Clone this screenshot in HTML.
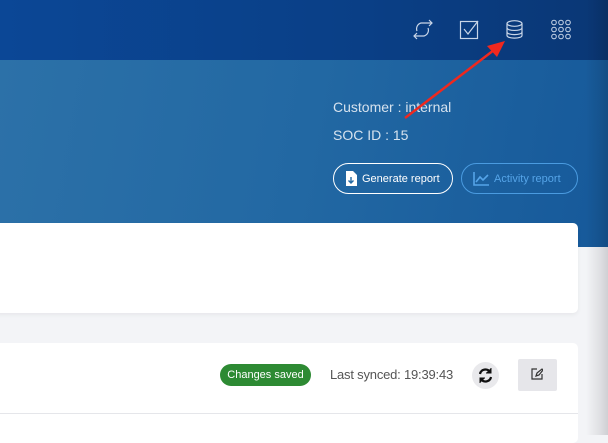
<!DOCTYPE html>
<html><head><meta charset="utf-8"><style>
*{margin:0;padding:0;box-sizing:border-box}
body{width:608px;height:435px;overflow:hidden;position:relative;background:#f3f4f7;font-family:"Liberation Sans",sans-serif}
.top{position:absolute;left:0;top:0;width:608px;height:60px;background:linear-gradient(90deg,#0b4796 0%,#0a3f86 60%,#0a3775 100%)}
.hero{position:absolute;left:0;top:60px;width:608px;height:187px;background:linear-gradient(100deg,#2c71a8 0%,#2268a3 50%,#16599a 100%)}
.shade{position:absolute;left:586px;top:0;width:22px;height:435px;background:linear-gradient(90deg,rgba(0,0,0,0) 0%,rgba(0,0,0,.08) 60%,rgba(0,0,0,.15) 100%)}
.card{position:absolute;background:#fff;border-radius:5px}
.t{position:absolute;color:#d6e2ee;font-size:14px}
.btn{position:absolute;height:31px;border-radius:16px;font-size:11px;display:flex;align-items:center;gap:5px;padding-left:11px}
</style></head><body>
<div class="top"></div>
<div class="hero"></div>
<svg style="position:absolute;left:412px;top:18px" width="160" height="24" fill="none" stroke="#c9d6e8" stroke-width="1.2">
<path d="M5 13A6 6 0 0 1 9 5h11M17 2l3 3-3 3M16 10a6 6 0 0 1-4 8H2M5 21l-3-3 3-3"/>
<rect x="48.5" y="3.5" width="17" height="17"/><path d="M52 11l4 5 10-13"/>
<ellipse cx="102.5" cy="5.5" rx="7.5" ry="2.8"/><path d="M95 5.5v12c0 3.5 15 3.5 15 0v-12M95 9.8c0 3.5 15 3.5 15 0M95 14c0 3.5 15 3.5 15 0"/>
<g stroke-width="1"><circle cx="142" cy="4.5" r="2.3"/><circle cx="149" cy="4.5" r="2.3"/><circle cx="156" cy="4.5" r="2.3"/><circle cx="142" cy="11.5" r="2.3"/><circle cx="149" cy="11.5" r="2.3"/><circle cx="156" cy="11.5" r="2.3"/><circle cx="142" cy="18.5" r="2.3"/><circle cx="149" cy="18.5" r="2.3"/><circle cx="156" cy="18.5" r="2.3"/></g>
</svg>
<div class="t" style="left:333px;top:99px">Customer : internal</div>
<div class="t" style="left:333px;top:127px">SOC ID : 15</div>
<div class="btn" style="left:333px;top:163px;width:120px;border:1.5px solid #fff;color:#fff">
<svg width="12" height="15"><path d="M1 0h7l4 4v11H1z" fill="#fff"/><path d="M6 6v6M3.5 9.5L6 12l2.5-2.5" stroke="#2268a3" stroke-width="1.4" fill="none"/></svg>Generate report</div>
<div class="btn" style="left:461px;top:163px;width:117px;border:1.5px solid #4a9be0;color:#55a4e8">
<svg width="16" height="14" fill="none" stroke="#55a4e8" stroke-width="1.6"><path d="M1 0v13h15M3 10l4-5 3 3 5-5"/></svg>Activity report</div>
<div class="card" style="left:-6px;top:223px;width:584px;height:90px;box-shadow:0 2px 4px rgba(0,0,0,.05)"></div>
<div class="card" style="left:-6px;top:343px;width:584px;height:100px"></div>
<div style="position:absolute;left:0;top:413px;width:578px;height:1px;background:#e5e6ea"></div>
<div style="position:absolute;left:220px;top:364px;width:91px;height:22px;border-radius:11px;background:#2d8a33;color:#fff;font-size:11px;text-align:center;line-height:22px">Changes saved</div>
<div style="position:absolute;left:330px;top:367px;color:#555;font-size:13px;letter-spacing:-0.2px">Last synced: 19:39:43</div>
<div style="position:absolute;left:472px;top:362px;width:27px;height:27px;border-radius:50%;background:#e9e9ec"></div>
<svg style="position:absolute;left:477px;top:367px" width="17" height="17" fill="none" stroke="#111" stroke-width="2.2"><path d="M3 7a5.5 5.5 0 0 1 10-2M14 10a5.5 5.5 0 0 1-10 2"/><path d="M14 1v5h-5M3 16v-5h5" fill="#111" stroke-width="1"/></svg>
<div style="position:absolute;left:518px;top:359px;width:39px;height:32px;background:#e6e6ea;border-radius:2px"></div>
<svg style="position:absolute;left:531px;top:368px" width="12" height="12" fill="none" stroke="#333" stroke-width="1.2"><path d="M6 1H1v10h10V6M5 8l1-3 5-4 1 1-4 5z"/></svg>
<svg style="position:absolute;left:0;top:0" width="608" height="435"><path d="M405 118L494 50" stroke="#f0281e" stroke-width="2.4"/><path d="M505 41L487 46L497 57z" fill="#f0281e"/></svg>
<div class="shade"></div>
</body></html>
